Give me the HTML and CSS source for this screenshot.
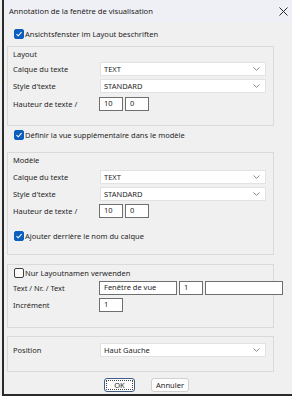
FILE: index.html
```html
<!DOCTYPE html>
<html>
<head>
<meta charset="utf-8">
<link rel="stylesheet" href="styles.css">
</head>
<body>
<div class="window">
  <div class="titlebar">
    <span class="title">Annotation de la fenêtre de visualisation</span>
    <svg class="close" width="9" height="9" viewBox="0 0 9 9"><path d="M0.5 0.5L8.5 8.5M8.5 0.5L0.5 8.5" stroke="#2b2b2b" stroke-width="1"/></svg>
  </div>
  <div class="content">
    <label class="cbrow cb-top">
      <span class="cb checked"><svg width="8" height="8" viewBox="0 0 8 8"><path d="M1.5 4.2L3.2 5.8L6.6 2.2" fill="none" stroke="#fff" stroke-width="1.1"/></svg></span>
      <span>Ansichtsfenster im Layout beschriften</span>
    </label>

    <div class="group g1">
      <div class="gtitle">Layout</div>
      <div class="row r-first"><span class="lbl">Calque du texte</span><div class="select"><span>TEXT</span><svg class="chev" width="7" height="4" viewBox="0 0 7 4"><path d="M0.5 0.5L3.5 3.3L6.5 0.5" fill="none" stroke="#8a8a8a"/></svg></div></div>
      <div class="row"><span class="lbl">Style d'texte</span><div class="select"><span>STANDARD</span><svg class="chev" width="7" height="4" viewBox="0 0 7 4"><path d="M0.5 0.5L3.5 3.3L6.5 0.5" fill="none" stroke="#8a8a8a"/></svg></div></div>
      <div class="row r-inputs"><span class="lbl">Hauteur de texte /</span><div class="inputs"><span class="input w24">10</span><span class="input w24">0</span></div></div>
    </div>

    <label class="cbrow cb-mid">
      <span class="cb checked"><svg width="8" height="8" viewBox="0 0 8 8"><path d="M1.5 4.2L3.2 5.8L6.6 2.2" fill="none" stroke="#fff" stroke-width="1.1"/></svg></span>
      <span>Définir la vue supplémentaire dans le modèle</span>
    </label>

    <div class="group g2">
      <div class="gtitle">Modèle</div>
      <div class="row r-first"><span class="lbl">Calque du texte</span><div class="select"><span>TEXT</span><svg class="chev" width="7" height="4" viewBox="0 0 7 4"><path d="M0.5 0.5L3.5 3.3L6.5 0.5" fill="none" stroke="#8a8a8a"/></svg></div></div>
      <div class="row"><span class="lbl">Style d'texte</span><div class="select"><span>STANDARD</span><svg class="chev" width="7" height="4" viewBox="0 0 7 4"><path d="M0.5 0.5L3.5 3.3L6.5 0.5" fill="none" stroke="#8a8a8a"/></svg></div></div>
      <div class="row"><span class="lbl">Hauteur de texte /</span><div class="inputs"><span class="input w24">10</span><span class="input w24">0</span></div></div>
      <label class="cbrow cb-in">
        <span class="cb checked"><svg width="8" height="8" viewBox="0 0 8 8"><path d="M1.5 4.2L3.2 5.8L6.6 2.2" fill="none" stroke="#fff" stroke-width="1.1"/></svg></span>
        <span>Ajouter derrière le nom du calque</span>
      </label>
    </div>

    <div class="group g3">
      <label class="cbrow cb-g3">
        <span class="cb"></span>
        <span>Nur Layoutnamen verwenden</span>
      </label>
      <div class="row r-tight"><span class="lbl">Text / Nr. / Text</span><div class="inputs"><span class="input w78">Fenêtre de vue</span><span class="input w24">1</span><span class="input w78"></span></div></div>
      <div class="row"><span class="lbl">Incrément</span><div class="inputs"><span class="input w24">1</span></div></div>
    </div>

    <div class="group g4">
      <div class="row"><span class="lbl">Position</span><div class="select"><span>Haut Gauche</span><svg class="chev" width="7" height="4" viewBox="0 0 7 4"><path d="M0.5 0.5L3.5 3.3L6.5 0.5" fill="none" stroke="#8a8a8a"/></svg></div></div>
    </div>

    <div class="buttons">
      <button class="btn ok">OK</button>
      <button class="btn">Annuler</button>
    </div>
  </div>
</div>
</body>
</html>
```

FILE: styles.css
```css
* { box-sizing: border-box; }
html, body { margin: 0; padding: 0; }
body {
  width: 292px;
  height: 396px;
  background: #f0f0f0;
  font-family: "Noto Sans", "Open Sans", sans-serif;
  font-size: 7.5px;
  color: #262626;
  overflow: hidden;
}
.window {
  margin-left: 2px;
  width: 290px;
  height: 396px;
  border-left: 2px solid #2a2a2a;
  border-bottom: 2px solid #2a2a2a;
  background: #f0f0f0;
  display: flex;
  flex-direction: column;
}
.titlebar {
  height: 22px;
  background: #eff0f5;
  display: flex;
  align-items: center;
  justify-content: space-between;
  padding: 0 4px 0 5px;
}
.title { font-size: 7.6px; color: #1b1b1b; }
.close { margin-right: 0; }
.content {
  padding-left: 3px;
  display: flex;
  flex-direction: column;
}
.cbrow {
  display: flex;
  align-items: center;
  height: 14px;
  gap: 1px;
}
.cb {
  width: 10px;
  height: 10px;
  border-radius: 2px;
  border: 1px solid #3f3f3f;
  background: #fbfbfb;
  display: flex;
  align-items: center;
  justify-content: center;
  flex: none;
}
.cb.checked {
  background: #0a5fbf;
  border-color: #0a5fbf;
}
.cb-top { margin-top: 5px; padding-left: 7px; }
.cb-mid { margin-top: 2px; padding-left: 7px; }
.cb-in { margin-top: 11px; padding-left: 1px; }
.cb-g3 { padding-left: 1px; }

.group {
  width: 267px;
  border: 1px solid #dadada;
  padding-left: 5px;
  display: flex;
  flex-direction: column;
}
.g1 { margin-top: 5px; padding-top: 1px; padding-bottom: 14px; }
.g2 { margin-top: 10px; padding-top: 1px; padding-bottom: 11px; }
.g3 { margin-top: 9px; padding-top: 1px; padding-bottom: 15px; }
.g4 { margin-top: 8px; padding-top: 6px; padding-bottom: 14px; }

.gtitle { height: 12px; line-height: 12px; }
.row {
  display: flex;
  align-items: center;
  height: 14px;
  margin-top: 3px;
}
.g1 .r-first { margin-top: 2px; }
.g1 .r-inputs { margin-top: 4px; }
.g2 .r-first { margin-top: 4px; }
.g4 .row { margin-top: 0; }
.r-tight { margin-top: 1px; }
.lbl { width: 86px; flex: none; }
.select {
  margin-left: 1px;
  width: 166px;
  height: 14px;
  background: #ffffff;
  border: 1px solid #e2e2e2;
  display: flex;
  align-items: center;
  justify-content: space-between;
  padding: 0 5px 0 3px;
}
.chev { flex: none; }
.inputs { display: flex; gap: 2px; }
.input {
  height: 14px;
  background: #fff;
  border: 1px solid #6f6f6f;
  padding: 0 0 0 4px;
  line-height: 11px;
  display: block;
}
.w24 { width: 24px; }
.w78 { width: 78px; }
.buttons {
  margin-top: 6px;
  display: flex;
  justify-content: center;
  gap: 16px;
  padding-right: 6px;
}
.btn {
  font-family: inherit;
  font-size: 7.5px;
  color: #1b1b1b;
  height: 14px;
  padding: 0;
  background: #fdfdfd;
  border: 1px solid #d0d0d0;
  border-radius: 3px;
  width: 38px;
}
.btn.ok {
  width: 31px;
  border-color: #3d5f86;
  outline: 1px dotted #444;
  outline-offset: -3px;
}
```
